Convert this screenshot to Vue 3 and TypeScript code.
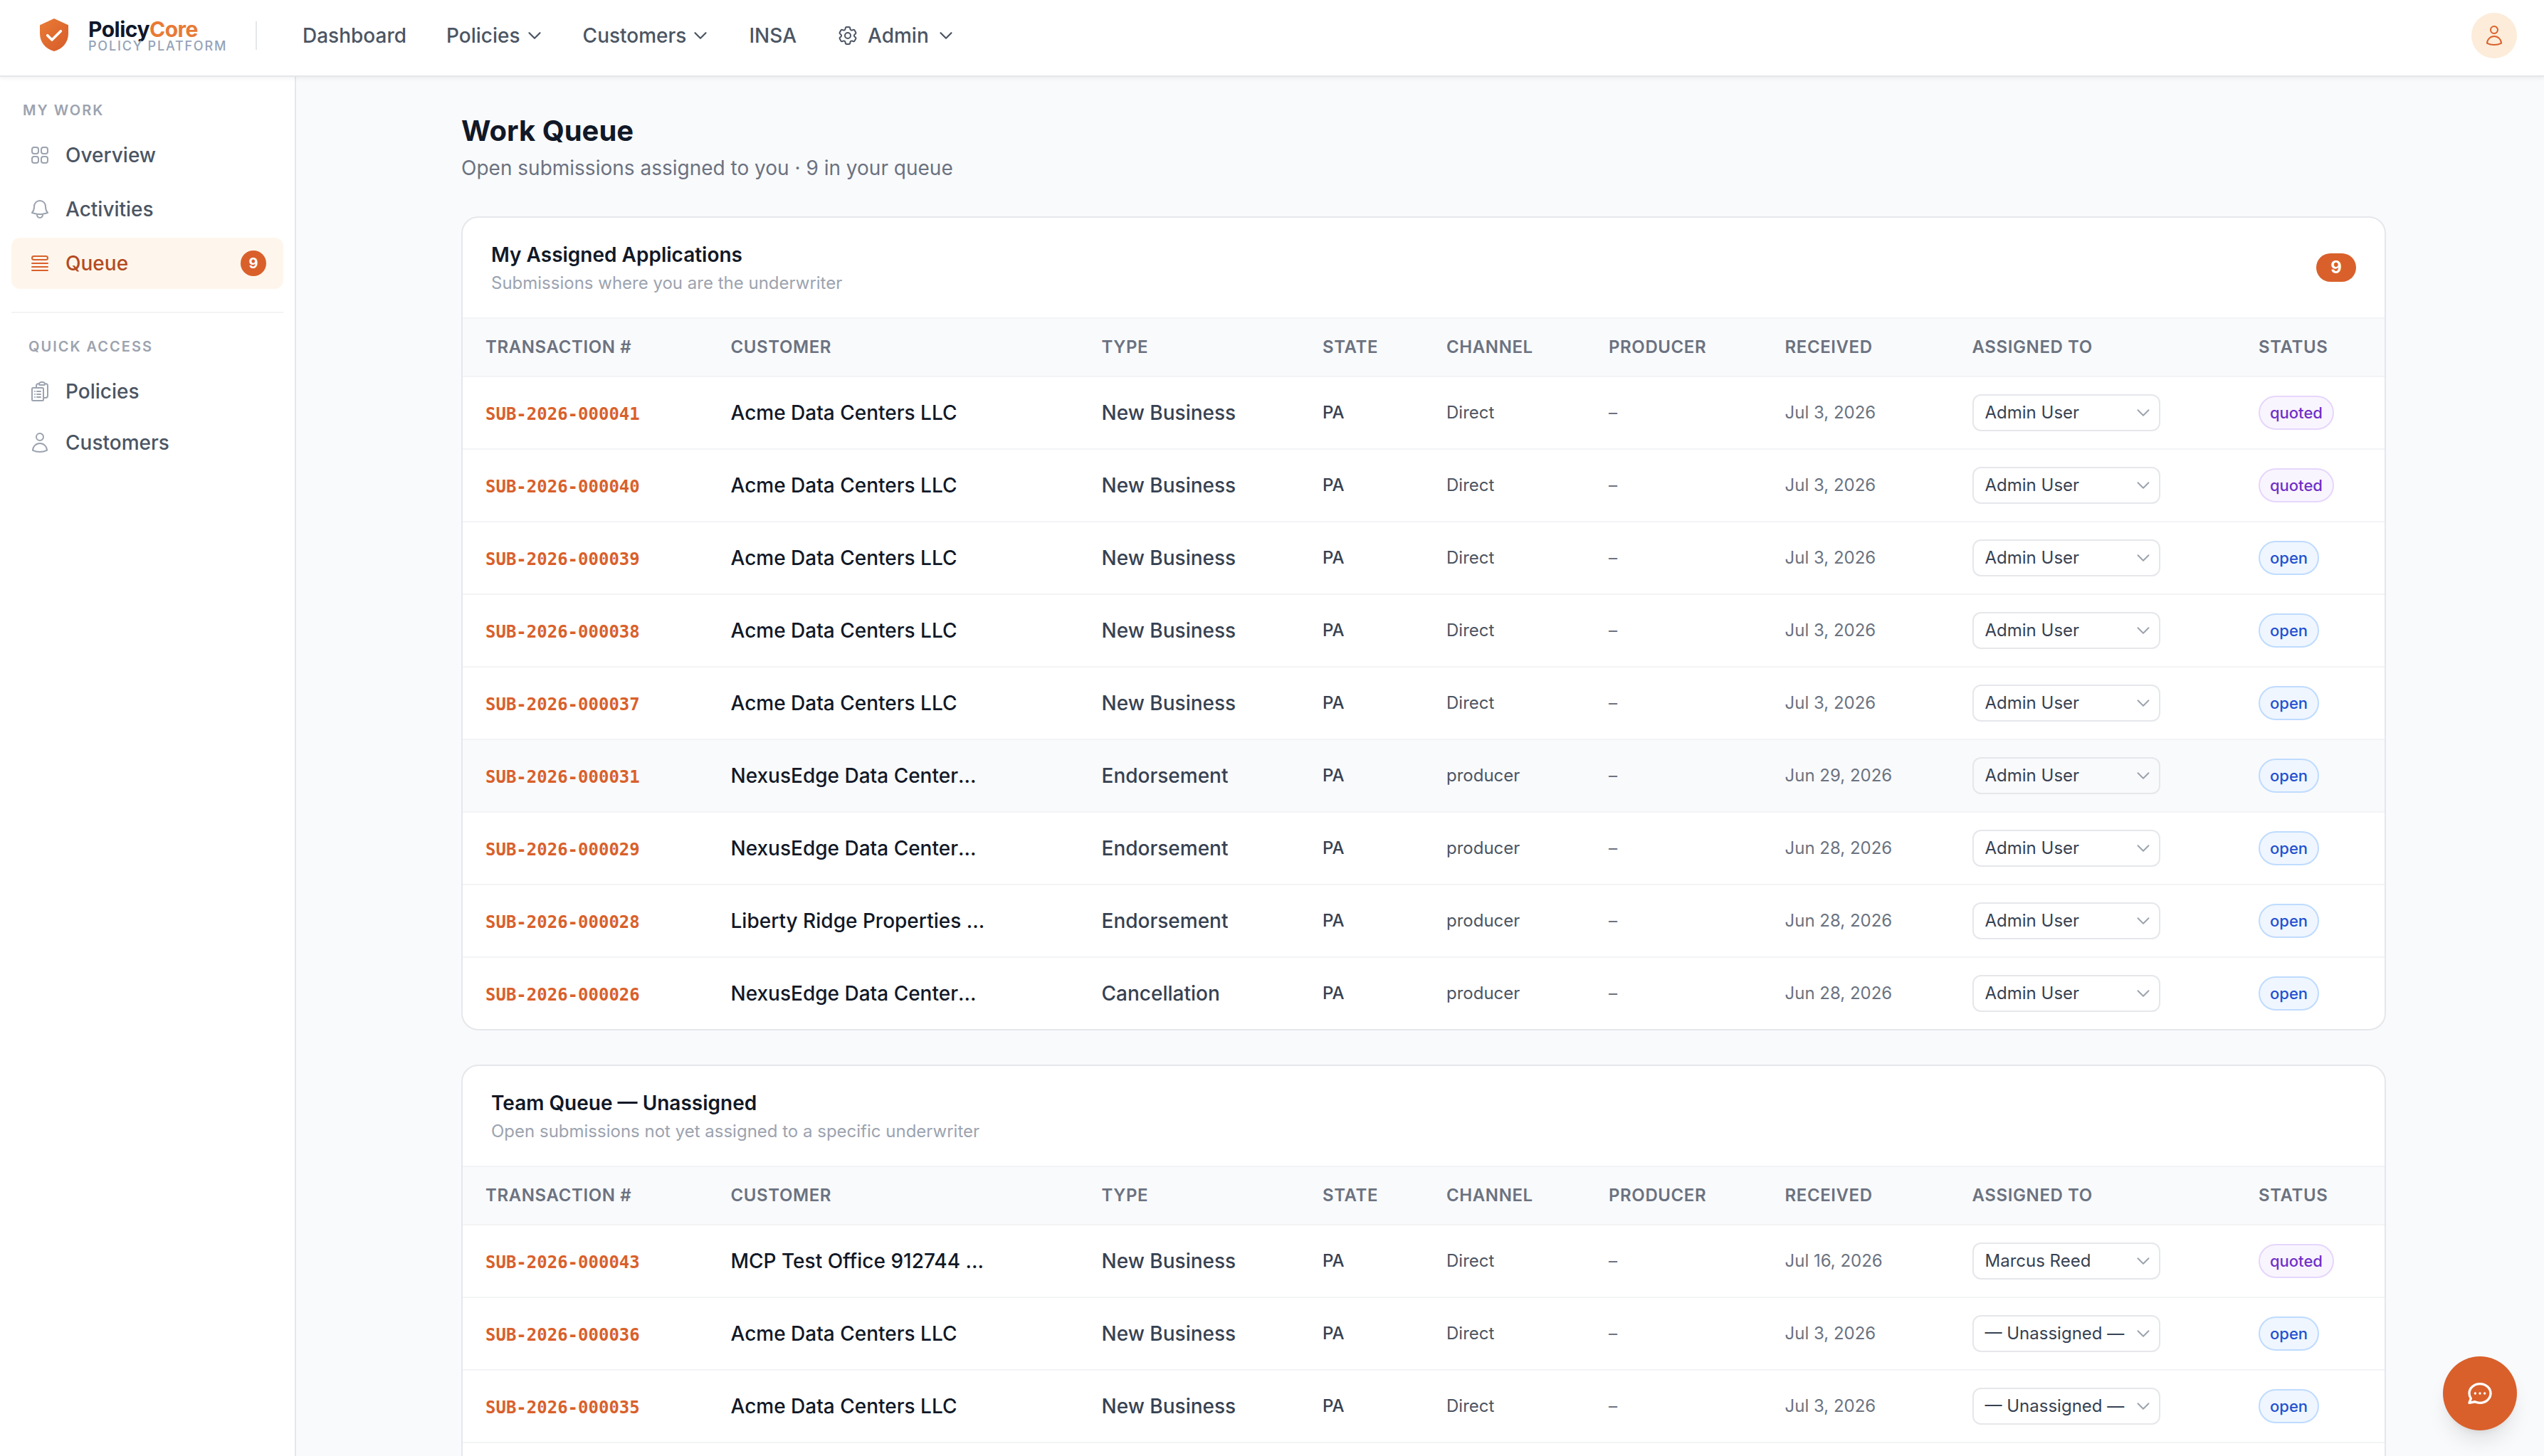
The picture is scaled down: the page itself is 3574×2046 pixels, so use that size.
<script setup lang="ts">
interface Submission {
  id: string
  customer: string
  truncated: boolean
  type: string
  channel: string
  received: string
  assignee: string
  status: 'quoted' | 'open'
  active?: boolean
}

interface Queue {
  title: string
  subtitle: string
  count?: number
  rows: Submission[]
}

const icons = {
  overview:
    'M3.75 6A2.25 2.25 0 016 3.75h2.25A2.25 2.25 0 0110.5 6v2.25a2.25 2.25 0 01-2.25 2.25H6a2.25 2.25 0 01-2.25-2.25V6zM3.75 15.75A2.25 2.25 0 016 13.5h2.25a2.25 2.25 0 012.25 2.25V18a2.25 2.25 0 01-2.25 2.25H6A2.25 2.25 0 013.75 18v-2.25zM13.5 6a2.25 2.25 0 012.25-2.25H18A2.25 2.25 0 0120.25 6v2.25A2.25 2.25 0 0118 10.5h-2.25a2.25 2.25 0 01-2.25-2.25V6zM13.5 15.75a2.25 2.25 0 012.25-2.25H18a2.25 2.25 0 012.25 2.25V18A2.25 2.25 0 0118 20.25h-2.25A2.25 2.25 0 0113.5 18v-2.25z',
  bell:
    'M14.857 17.082a23.848 23.848 0 005.454-1.31A8.967 8.967 0 0118 9.75v-.7V9A6 6 0 006 9v.75a8.967 8.967 0 01-2.312 6.022c1.733.64 3.56 1.085 5.455 1.31m5.714 0a24.255 24.255 0 01-5.714 0m5.714 0a3 3 0 11-5.714 0',
  queue:
    'M3.75 12h16.5m-16.5 3.75h16.5M3.75 19.5h16.5M5.625 4.5h12.75a1.875 1.875 0 010 3.75H5.625a1.875 1.875 0 010-3.75z',
  policies:
    'M9 12h3.75M9 15h3.75M9 18h3.75m3 .75H18a2.25 2.25 0 002.25-2.25V6.108c0-1.135-.845-2.098-1.976-2.192a48.424 48.424 0 00-1.123-.08m-5.801 0c-.065.21-.1.433-.1.664 0 .414.336.75.75.75h4.5a.75.75 0 00.75-.75 2.25 2.25 0 00-.1-.664m-5.8 0A2.251 2.251 0 0113.5 2.25H15c1.012 0 1.867.668 2.15 1.586m-5.8 0c-.376.023-.75.05-1.124.08C9.095 4.01 8.25 4.973 8.25 6.108V8.25m0 0H4.875c-.621 0-1.125.504-1.125 1.125v11.25c0 .621.504 1.125 1.125 1.125h9.75c.621 0 1.125-.504 1.125-1.125V9.375c0-.621-.504-1.125-1.125-1.125H8.25zM6.75 12h.008v.008H6.75V12zm0 3h.008v.008H6.75V15zm0 3h.008v.008H6.75V18z',
  user:
    'M15.75 6a3.75 3.75 0 11-7.5 0 3.75 3.75 0 017.5 0zM4.501 20.118a7.5 7.5 0 0114.998 0A17.933 17.933 0 0112 21.75c-2.676 0-5.216-.584-7.499-1.632z',
  cog:
    'M9.594 3.94c.09-.542.56-.94 1.11-.94h2.593c.55 0 1.02.398 1.11.94l.213 1.281c.063.374.313.686.645.87.074.04.147.083.22.127.324.196.72.257 1.075.124l1.217-.456a1.125 1.125 0 011.37.49l1.296 2.247a1.125 1.125 0 01-.26 1.431l-1.003.827c-.293.24-.438.613-.431.992a6.759 6.759 0 010 .255c-.007.378.138.75.43.99l1.005.828c.424.35.534.954.26 1.43l-1.298 2.247a1.125 1.125 0 01-1.369.491l-1.217-.456c-.355-.133-.75-.072-1.076.124a6.57 6.57 0 01-.22.128c-.331.183-.581.495-.644.869l-.213 1.28c-.09.543-.56.941-1.11.941h-2.594c-.55 0-1.02-.398-1.11-.94l-.213-1.281c-.062-.374-.312-.686-.644-.87a6.52 6.52 0 01-.22-.127c-.325-.196-.72-.257-1.076-.124l-1.217.456a1.125 1.125 0 01-1.369-.49l-1.297-2.247a1.125 1.125 0 01.26-1.431l1.004-.827c.292-.24.437-.613.43-.992a6.932 6.932 0 010-.255c.007-.378-.138-.75-.43-.99l-1.004-.828a1.125 1.125 0 01-.26-1.43l1.297-2.247a1.125 1.125 0 011.37-.491l1.216.456c.356.133.751.072 1.076-.124.072-.044.146-.087.22-.128.332-.183.582-.495.644-.869l.214-1.281zM15 12a3 3 0 11-6 0 3 3 0 016 0z',
  chevron: 'M19.5 8.25l-7.5 7.5-7.5-7.5',
  chat:
    'M8 12h.01M12 12h.01M16 12h.01M21 12c0 4.418-4.03 8-9 8a9.863 9.863 0 01-4.255-.949L3 20l1.395-3.72C3.512 15.042 3 13.574 3 12c0-4.418 4.03-8 9-8s9 3.582 9 8z',
}

const nav = [
  { label: 'Dashboard', menu: false, gear: false },
  { label: 'Policies', menu: true, gear: false },
  { label: 'Customers', menu: true, gear: false },
  { label: 'INSA', menu: false, gear: false },
  { label: 'Admin', menu: true, gear: true },
]

const work = [
  { label: 'Overview', icon: icons.overview },
  { label: 'Activities', icon: icons.bell },
  { label: 'Queue', icon: icons.queue, active: true, badge: 9 },
]

const quick = [
  { label: 'Policies', icon: icons.policies },
  { label: 'Customers', icon: icons.user },
]

const columns = ['Transaction #', 'Customer', 'Type', 'State', 'Channel', 'Producer', 'Received', 'Assigned To', 'Status']

const acme = 'Acme Data Centers LLC'
const nexus = 'NexusEdge Data Center…'
const admin = 'Admin User'
const none = '— Unassigned —'

function row(
  n: string,
  customer: string,
  type: string,
  channel: string,
  received: string,
  assignee: string,
  status: 'quoted' | 'open',
  active = false,
): Submission {
  return {
    id: `SUB-2026-0000${n}`,
    customer: customer.replace('…', ''),
    truncated: customer.endsWith('…'),
    type,
    channel,
    received,
    assignee,
    status,
    active,
  }
}

const queues: Queue[] = [
  {
    title: 'My Assigned Applications',
    subtitle: 'Submissions where you are the underwriter',
    count: 9,
    rows: [
      row('41', acme, 'New Business', 'Direct', 'Jul 3, 2026', admin, 'quoted'),
      row('40', acme, 'New Business', 'Direct', 'Jul 3, 2026', admin, 'quoted'),
      row('39', acme, 'New Business', 'Direct', 'Jul 3, 2026', admin, 'open'),
      row('38', acme, 'New Business', 'Direct', 'Jul 3, 2026', admin, 'open'),
      row('37', acme, 'New Business', 'Direct', 'Jul 3, 2026', admin, 'open'),
      row('31', nexus, 'Endorsement', 'producer', 'Jun 29, 2026', admin, 'open', true),
      row('29', nexus, 'Endorsement', 'producer', 'Jun 28, 2026', admin, 'open'),
      row('28', 'Liberty Ridge Properties …', 'Endorsement', 'producer', 'Jun 28, 2026', admin, 'open'),
      row('26', nexus, 'Cancellation', 'producer', 'Jun 28, 2026', admin, 'open'),
    ],
  },
  {
    title: 'Team Queue — Unassigned',
    subtitle: 'Open submissions not yet assigned to a specific underwriter',
    rows: [
      row('43', 'MCP Test Office 912744 …', 'New Business', 'Direct', 'Jul 16, 2026', 'Marcus Reed', 'quoted'),
      row('36', acme, 'New Business', 'Direct', 'Jul 3, 2026', none, 'open'),
      row('35', acme, 'New Business', 'Direct', 'Jul 3, 2026', none, 'open'),
    ],
  },
]
</script>

<template>
  <div class="app">
    <header class="topbar">
      <div class="brand">
        <svg class="shield" viewBox="0 0 40 46">
          <defs>
            <linearGradient id="shieldFill" x1="0" y1="0" x2="1" y2="1">
              <stop offset="0" stop-color="#e97c36" />
              <stop offset="1" stop-color="#d65b29" />
            </linearGradient>
          </defs>
          <path d="M20 0L40 9.3V21C40 33.5 32 43 20 46C8 43 0 33.5 0 21V9.3Z" fill="url(#shieldFill)" />
          <path
            d="M10.7 23.7L17 30L29.3 17.7"
            fill="none"
            stroke="#fff"
            stroke-width="3.6"
            stroke-linecap="round"
            stroke-linejoin="round"
          />
        </svg>
        <div class="brand-text">
          <div class="brand-name">Policy<span>Core</span></div>
          <div class="brand-sub">POLICY PLATFORM</div>
        </div>
      </div>
      <div class="brand-divider"></div>
      <nav class="nav">
        <a v-for="item in nav" :key="item.label" class="nav-item" :class="{ wide: item.gear }">
          <svg v-if="item.gear" class="icon" viewBox="0 0 24 24"><path :d="icons.cog" /></svg>
          {{ item.label }}
          <svg v-if="item.menu" class="icon chevron" viewBox="0 0 24 24"><path :d="icons.chevron" /></svg>
        </a>
      </nav>
      <div class="avatar">
        <svg class="icon" viewBox="0 0 24 24"><path :d="icons.user" /></svg>
      </div>
    </header>

    <div class="body">
      <aside class="sidebar">
        <div class="side-label">MY WORK</div>
        <a v-for="item in work" :key="item.label" class="side-item" :class="{ active: item.active }">
          <svg class="icon" viewBox="0 0 24 24"><path :d="item.icon" /></svg>
          <span>{{ item.label }}</span>
          <b v-if="item.badge" class="side-badge">{{ item.badge }}</b>
        </a>
        <div class="side-rule"></div>
        <div class="side-label quick">QUICK ACCESS</div>
        <a v-for="item in quick" :key="item.label" class="side-item small">
          <svg class="icon" viewBox="0 0 24 24"><path :d="item.icon" /></svg>
          <span>{{ item.label }}</span>
        </a>
      </aside>

      <main class="main">
        <h1>Work Queue</h1>
        <p class="lead">Open submissions assigned to you · 9 in your queue</p>

        <section v-for="queue in queues" :key="queue.title" class="card">
          <div class="card-head">
            <div>
              <h2>{{ queue.title }}</h2>
              <p>{{ queue.subtitle }}</p>
            </div>
            <span v-if="queue.count" class="count">{{ queue.count }}</span>
          </div>
          <table>
            <colgroup>
              <col class="c-id" />
              <col class="c-customer" />
              <col class="c-type" />
              <col class="c-state" />
              <col class="c-channel" />
              <col class="c-producer" />
              <col class="c-received" />
              <col class="c-assigned" />
              <col />
            </colgroup>
            <thead>
              <tr>
                <th v-for="column in columns" :key="column">{{ column }}</th>
              </tr>
            </thead>
            <tbody>
              <tr v-for="item in queue.rows" :key="item.id" :class="{ hovered: item.active }">
                <td class="id">{{ item.id }}</td>
                <td class="customer">{{ item.customer }}<span v-if="item.truncated" class="more">…</span></td>
                <td class="type">{{ item.type }}</td>
                <td class="state">PA</td>
                <td class="channel">{{ item.channel }}</td>
                <td class="muted">–</td>
                <td class="muted">{{ item.received }}</td>
                <td>
                  <div class="select">
                    <span>{{ item.assignee }}</span>
                    <svg class="icon" viewBox="0 0 24 24"><path :d="icons.chevron" /></svg>
                  </div>
                </td>
                <td><span class="pill" :class="item.status">{{ item.status }}</span></td>
              </tr>
            </tbody>
          </table>
        </section>
      </main>
    </div>

    <button class="fab">
      <svg class="icon" viewBox="0 0 24 24"><path :d="icons.chat" /></svg>
    </button>
  </div>
</template>

<style>
body {
  margin: 0;
}
</style>

<style scoped>
.app {
  display: flex;
  flex-direction: column;
  width: 3574px;
  height: 2046px;
  overflow: hidden;
  position: relative;
  background: #f9fafc;
  color: #111827;
  font-family: Inter, 'Liberation Sans', sans-serif;
  font-size: 28px;
  line-height: 40px;
}

h1,
h2,
p {
  margin: 0;
}

.icon {
  width: 32px;
  height: 32px;
  flex: none;
  fill: none;
  stroke: currentColor;
  stroke-width: 1.5;
  stroke-linecap: round;
  stroke-linejoin: round;
}

/* Top bar */
.topbar {
  flex: none;
  box-sizing: border-box;
  height: 108px;
  padding: 0 38px 6px 56px;
  border-bottom: 2px solid #e5e7eb;
  background: #fff;
  box-shadow: 0 2px 6px rgba(0, 0, 0, 0.06);
  display: flex;
  align-items: center;
  position: relative;
  z-index: 1;
}

.brand {
  display: flex;
  align-items: center;
  gap: 28px;
  width: 303px;
}

.shield {
  width: 40px;
  height: 46px;
  flex: none;
  margin-top: -2px;
}

.brand-text {
  padding-top: 3px;
  white-space: nowrap;
}

.brand-name {
  font-size: 30px;
  line-height: 26px;
  font-weight: 700;
  letter-spacing: -0.5px;
  color: #0f172a;
}

.brand-name span {
  color: #e87a35;
}

.brand-sub {
  font-size: 18px;
  line-height: 21px;
  font-weight: 500;
  letter-spacing: 1.8px;
  color: #94a3b8;
}

.brand-divider {
  width: 2px;
  height: 40px;
  background: #e5e7eb;
}

.nav {
  display: flex;
  gap: 56px;
  margin-left: 64px;
  flex: 1;
}

.nav-item {
  display: flex;
  align-items: center;
  gap: 8px;
  font-weight: 500;
  color: #4b5563;
}

.nav-item.wide {
  gap: 12px;
}

.chevron {
  width: 24px;
  height: 24px;
  stroke-width: 2.25;
}

.avatar {
  width: 64px;
  height: 64px;
  border-radius: 50%;
  background: #fcecd9;
  color: #d9602b;
  display: flex;
  align-items: center;
  justify-content: center;
}

/* Sidebar */
.body {
  flex: 1;
  min-height: 0;
  display: flex;
}

.sidebar {
  flex: none;
  box-sizing: border-box;
  width: 416px;
  padding: 32px 16px 0;
  border-right: 2px solid #e5e7eb;
  background: #fff;
}

.side-label {
  margin-bottom: 12px;
  padding-left: 16px;
  font-size: 20px;
  line-height: 30px;
  font-weight: 600;
  letter-spacing: 2px;
  color: #9ca3af;
}

.side-label.quick {
  margin: 0 0 14px;
  padding-left: 24px;
}

.side-item {
  box-sizing: border-box;
  height: 72px;
  margin-bottom: 4px;
  padding: 0 24px;
  border-radius: 12px;
  display: flex;
  align-items: center;
  gap: 20px;
  font-weight: 500;
  color: #4b5563;
}

.side-item .icon {
  color: #9ca3af;
}

.side-item.small {
  height: 68px;
}

.side-item.active {
  background: #fef6ec;
  color: #b54a1f;
}

.side-item.active .icon {
  color: #d9602b;
}

.side-badge {
  margin-left: auto;
  width: 36px;
  height: 36px;
  border-radius: 18px;
  background: #d9602b;
  color: #fff;
  font-size: 20px;
  line-height: 36px;
  font-weight: 700;
  text-align: center;
}

.side-rule {
  height: 2px;
  margin: 32px 0;
  background: #f3f4f6;
}

/* Page */
.main {
  flex: 1;
  min-width: 0;
  overflow: hidden;
  display: flex;
  flex-direction: column;
  padding: 48px 222px 0 232px;
}

h1 {
  font-size: 40px;
  line-height: 56px;
  font-weight: 700;
}

.lead {
  margin-top: 4px;
  color: #6b7280;
}

.card {
  flex: none;
  margin-top: 48px;
  border: 2px solid #e5e7eb;
  border-radius: 24px;
  background: #fff;
  overflow: hidden;
}

.card:last-child {
  min-height: 700px;
}

.card-head {
  display: flex;
  align-items: center;
  justify-content: space-between;
  padding: 32px 40px;
  border-bottom: 2px solid #f3f4f6;
}

h2 {
  font-size: 28px;
  line-height: 40px;
  font-weight: 600;
}

.card-head p {
  margin-top: 4px;
  font-size: 24px;
  line-height: 32px;
  color: #9ca3af;
}

.count {
  padding: 0 20px;
  min-width: 16px;
  border-radius: 20px;
  background: #d9602b;
  color: #fff;
  font-size: 24px;
  line-height: 40px;
  font-weight: 700;
  text-align: center;
}

/* Table */
table {
  width: 100%;
  table-layout: fixed;
  border-collapse: separate;
  border-spacing: 0;
}

.c-id {
  width: 344.5px;
}
.c-customer {
  width: 521px;
}
.c-type {
  width: 310.5px;
}
.c-state {
  width: 174px;
}
.c-channel {
  width: 228px;
}
.c-producer {
  width: 247.5px;
}
.c-received {
  width: 263px;
}
.c-assigned {
  width: 402.5px;
}

th,
td {
  padding: 0 0 0 32px;
  text-align: left;
  vertical-align: middle;
  white-space: nowrap;
  border-bottom: 2px solid #f3f4f6;
}

th {
  height: 80px;
  background: #f9fafc;
  font-size: 24px;
  line-height: 32px;
  font-weight: 600;
  letter-spacing: 0.6px;
  text-transform: uppercase;
  color: #6b7280;
}

td {
  height: 100px;
  font-size: 24px;
  line-height: 32px;
}

.card:not(:last-child) tbody tr:last-child td {
  border-bottom: 0;
}

.hovered td {
  background: #f9fafc;
}

td.id {
  padding-top: 3px;
  height: 97px;
  font-family: 'DejaVu Sans Mono', 'Liberation Mono', monospace;
  font-weight: 700;
  color: #d9602b;
}

.customer {
  font-size: 28px;
  font-weight: 500;
  color: #111827;
}

.more {
  display: inline-block;
}

.type {
  font-size: 28px;
  font-weight: 500;
  color: #374151;
}

.state {
  font-weight: 500;
  color: #374151;
}

.channel {
  color: #4b5563;
}

.muted {
  color: #6b7280;
}

.select {
  box-sizing: border-box;
  width: 264px;
  height: 52px;
  padding: 0 10px 0 16px;
  border: 2px solid #e5e7eb;
  border-radius: 12px;
  display: flex;
  align-items: center;
  justify-content: space-between;
  color: #374151;
}

.select .icon {
  width: 24px;
  height: 24px;
  stroke-width: 2;
  color: #9ca3af;
}

.pill {
  box-sizing: border-box;
  display: inline-block;
  vertical-align: middle;
  height: 48px;
  padding: 0 14px;
  border: 2px solid;
  border-radius: 24px;
  font-size: 22px;
  line-height: 44px;
  font-weight: 500;
}

.pill.quoted {
  background: #f9f5fe;
  border-color: #e6d6fc;
  color: #7030c8;
}

.pill.open {
  background: #eff6ff;
  border-color: #bfdbfe;
  color: #2450d0;
}

/* Chat launcher floats over the page */
.fab {
  position: absolute;
  right: 38px;
  bottom: 36px;
  width: 104px;
  height: 104px;
  padding: 0;
  border: 0;
  border-radius: 50%;
  background: #d9602b;
  color: #fff;
  display: flex;
  align-items: center;
  justify-content: center;
  box-shadow: 0 20px 30px -6px rgba(0, 0, 0, 0.1), 0 8px 12px -8px rgba(0, 0, 0, 0.1);
}

.fab .icon {
  width: 40px;
  height: 40px;
  stroke-width: 2;
}
</style>
